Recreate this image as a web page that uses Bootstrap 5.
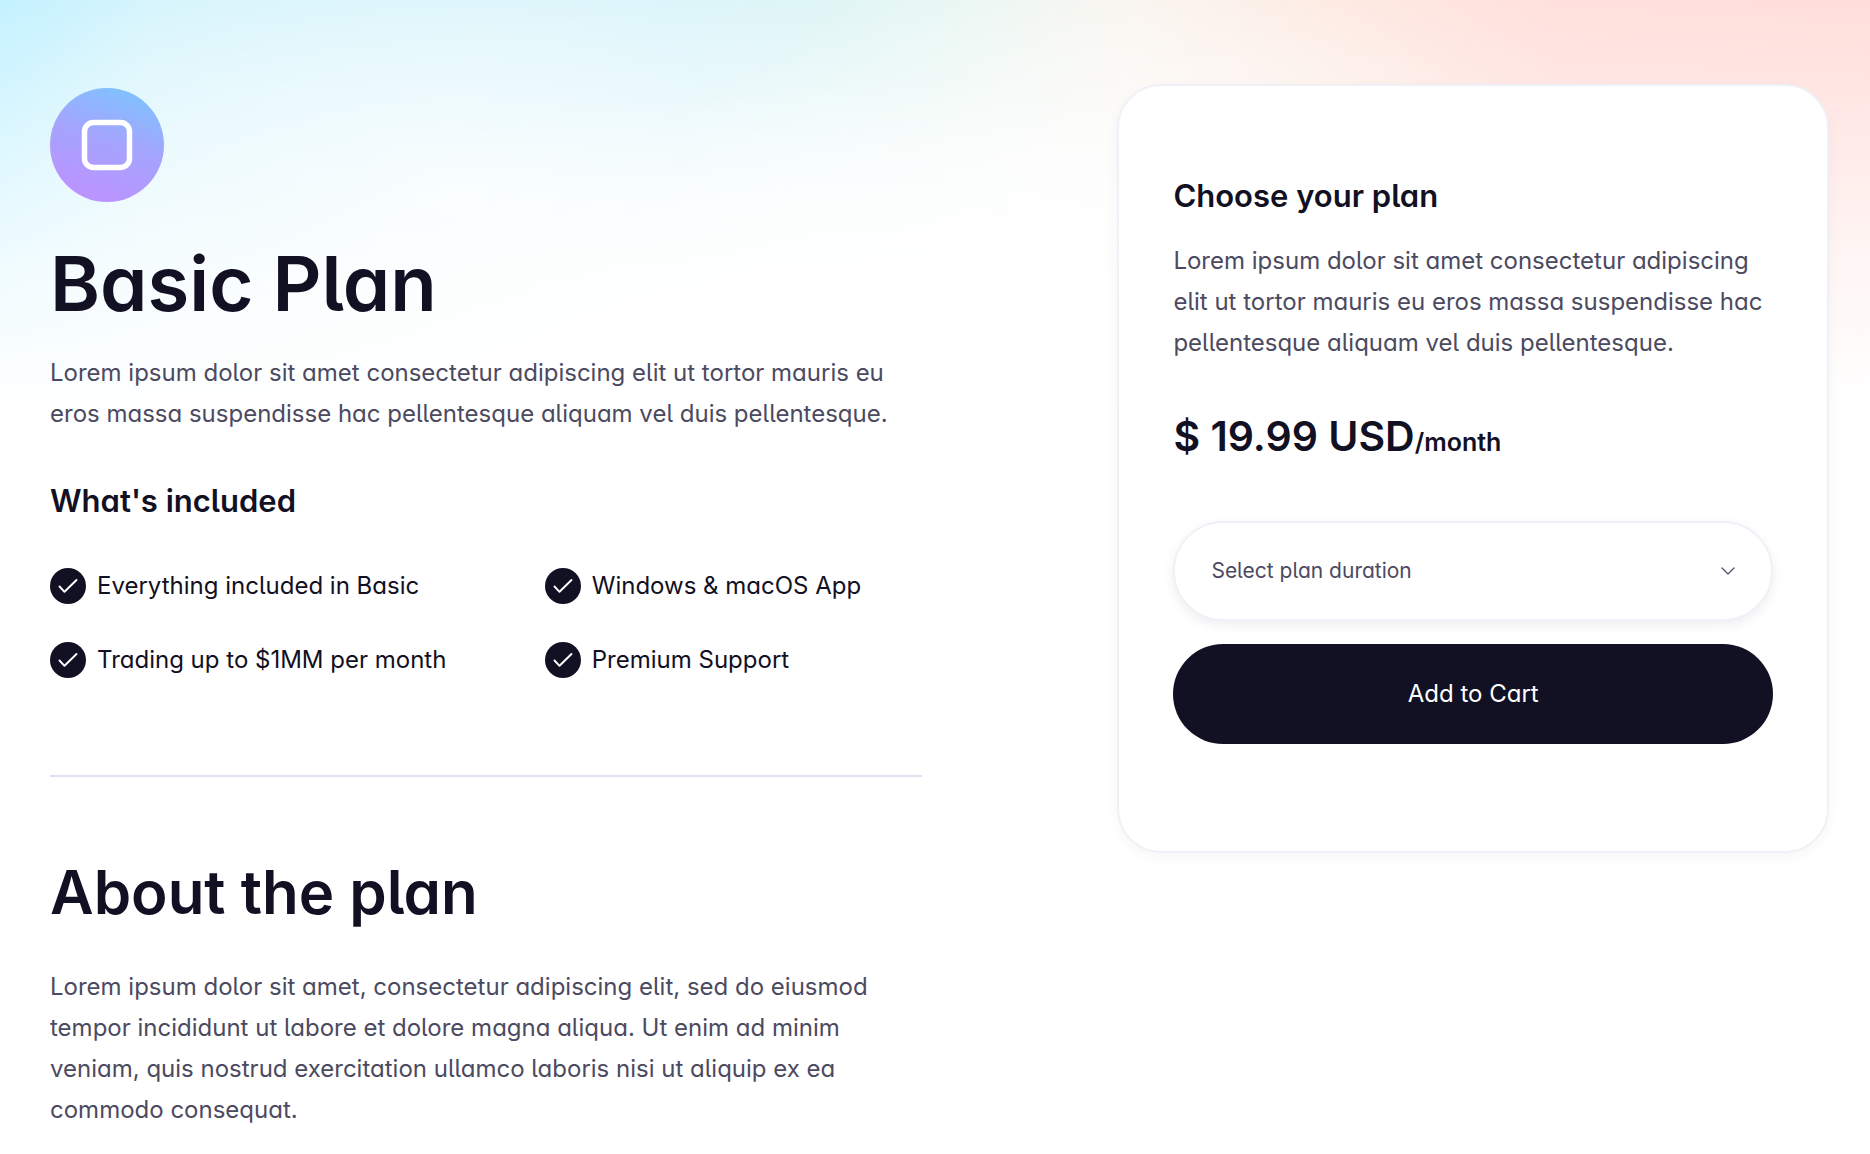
<!DOCTYPE html>
<html lang="en">
<head>
<meta charset="utf-8">
<meta name="viewport" content="width=device-width, initial-scale=1">
<title>Basic Plan</title>
<link href="https://cdn.jsdelivr.net/npm/bootstrap@5.3.0/dist/css/bootstrap.min.css" rel="stylesheet">
<style>
  :root { --ink: #121023; --ink-soft: #4c4a5f; --line: #f0f1f8; }
  body, button, select {
    font-family: Inter, "Liberation Sans", sans-serif;
    font-feature-settings: "cv05", "cv11";
  }
  body {
    font-weight: 400;
    font-size: 24px;
    line-height: 41px;
    color: var(--ink);
    background-color: #fff;
  }
  .page-wash {
    min-height: 100vh;
    background-repeat: no-repeat;
    background-image:
      linear-gradient(to bottom, rgba(255,255,255,0) 0, rgba(255,255,255,.3) 110px, rgba(255,255,255,.75) 270px, #fff 410px),
      radial-gradient(ellipse 38% 300px at 46% 380px, #fff 0, rgba(255,255,255,.85) 40%, rgba(255,255,255,0) 100%),
      radial-gradient(ellipse 24% 240px at 59% 200px, rgba(255,255,255,.7) 0, rgba(255,255,255,0) 100%),
      radial-gradient(ellipse 26% 280px at 24% 190px, rgba(255,255,255,.65) 0, rgba(255,255,255,0) 100%),
      linear-gradient(to right, #c4f2ff 0, #d4f4fc 8%, #d8f4fa 36%, #e6f7f3 50%, #f9f5ef 60%, #fdece4 70%, #ffe0dc 83%, #ffdeda 100%);
  }
  .plan-page { padding: 84px 41px 16px 50px; }
  .plan-info { padding-top: 4px; }
  h1, h2, h3 { font-weight: 600; color: var(--ink); }
  h1 { font-size: 76px; line-height: 94px; margin: 34px 0 22px; }
  h2 { font-size: 60px; line-height: 72px; margin: 0 0 38px; }
  h3 { font-size: 31px; line-height: 38px; }
  .copy { color: var(--ink-soft); margin: 0; }
  .plan-logo { width: 114px; height: 114px; }
  .included { margin: 48px 0; }
  .feature-list { display: grid; gap: 38px 0; grid-template-columns: 1fr; }
  .feature-list li { gap: 11px; line-height: 36px; }
  .feature-list svg { width: 36px; height: 36px; }
  .divider { height: 2px; margin: 97px 0 79px; background: #dfe1ee; opacity: 1; border: 0; }
  .plan-card {
    border: 2px solid var(--line);
    border-radius: 44px;
    padding: 91px 54px 107px;
    margin-top: 40px;
    box-shadow: 0 4px 14px rgba(20,20,43,.04);
  }
  .plan-card h3 { margin-bottom: 25px; }
  .price { margin: 48px 0 54px; font-size: 41px; line-height: 50px; font-weight: 600; }
  .price span { font-size: 25px; }
  .duration, .cart-button { height: 100px; border-radius: 50px; }
  .duration {
    padding: 0 78px 0 36px;
    border: 2px solid var(--line);
    font-size: 21px;
    color: var(--ink-soft);
    box-shadow: 0 4px 12px rgba(20,20,43,.07);
    background-image: url("data:image/svg+xml,%3csvg xmlns='http://www.w3.org/2000/svg' viewBox='0 0 14 8'%3e%3cpath fill='none' stroke='%23545266' stroke-width='1.3' stroke-linecap='round' stroke-linejoin='round' d='m1 1 6 6 6-6'/%3e%3c/svg%3e");
    background-position: right 36px center;
    background-size: 14px 8px;
  }
  .cart-button, .cart-button:hover { background: var(--ink); color: #fff; font-size: 24px; border: 0; }
  .stack { gap: 23px; }
  @media (min-width: 768px) { .feature-list { grid-template-columns: 21fr 16fr; } }
  @media (min-width: 1200px) {
    .plan-info { width: 49%; }
    .plan-buy { width: 40%; }
    .plan-card { margin-top: 0; }
  }
</style>
<script src="https://cdn.jsdelivr.net/npm/bootstrap@5.3.0/dist/js/bootstrap.bundle.min.js" defer></script>
</head>
<body>
<svg class="d-none" aria-hidden="true">
  <symbol id="tick" viewBox="0 0 36 36">
    <circle cx="18" cy="18" r="18" fill="#121023"/>
    <path d="M9.500 18.500 14.500 23.800 26.500 12" fill="none" stroke="#fff" stroke-width="1.900" stroke-linecap="round" stroke-linejoin="round"/>
  </symbol>
</svg>
<div class="page-wash">
  <main class="plan-page container-fluid d-flex flex-column flex-xl-row justify-content-between align-items-xl-start">
    <div class="plan-info">
      <svg class="plan-logo d-block" viewBox="0 0 114 114" role="img" aria-label="Basic Plan icon">
        <defs>
          <linearGradient id="orb" x1="0.700" y1="0.060" x2="0.400" y2="0.940">
            <stop offset="0" stop-color="#83bfff"/>
            <stop offset="0.450" stop-color="#a3a5fd"/>
            <stop offset="1" stop-color="#ba94ff"/>
          </linearGradient>
        </defs>
        <circle cx="57" cy="57" r="57" fill="url(#orb)"/>
        <rect x="34.500" y="34.500" width="45" height="45" rx="9" fill="none" stroke="#fff" stroke-width="5.500"/>
      </svg>
      <h1>Basic Plan</h1>
      <p class="copy">Lorem ipsum dolor sit amet consectetur adipiscing elit ut tortor mauris eu eros massa suspendisse hac pellentesque aliquam vel duis pellentesque.</p>
      <h3 class="included">What's included</h3>
      <ul class="feature-list list-unstyled mb-0">
        <li class="d-flex align-items-center"><svg class="flex-shrink-0" aria-hidden="true"><use href="#tick"/></svg>Everything included in Basic</li>
        <li class="d-flex align-items-center"><svg class="flex-shrink-0" aria-hidden="true"><use href="#tick"/></svg>Windows &amp; macOS App</li>
        <li class="d-flex align-items-center"><svg class="flex-shrink-0" aria-hidden="true"><use href="#tick"/></svg>Trading up to $1MM per month</li>
        <li class="d-flex align-items-center"><svg class="flex-shrink-0" aria-hidden="true"><use href="#tick"/></svg>Premium Support</li>
      </ul>
      <hr class="divider">
      <h2>About the plan</h2>
      <p class="copy">Lorem ipsum dolor sit amet, consectetur adipiscing elit, sed do eiusmod tempor incididunt ut labore et dolore magna aliqua. Ut enim ad minim veniam, quis nostrud exercitation ullamco laboris nisi ut aliquip ex ea commodo consequat.</p>
    </div>
    <div class="plan-buy">
      <form class="plan-card bg-white">
        <h3><label for="duration">Choose your plan</label></h3>
        <p class="copy">Lorem ipsum dolor sit amet consectetur adipiscing elit ut tortor mauris eu eros massa suspendisse hac pellentesque aliquam vel duis pellentesque.</p>
        <p class="price">$ 19.99 USD<span>/month</span></p>
        <div class="stack d-flex flex-column">
          <select class="duration form-select" id="duration">
            <option>Select plan duration</option>
          </select>
          <button class="cart-button btn w-100" type="button">Add to Cart</button>
        </div>
      </form>
    </div>
  </main>
</div>
</body>
</html>
